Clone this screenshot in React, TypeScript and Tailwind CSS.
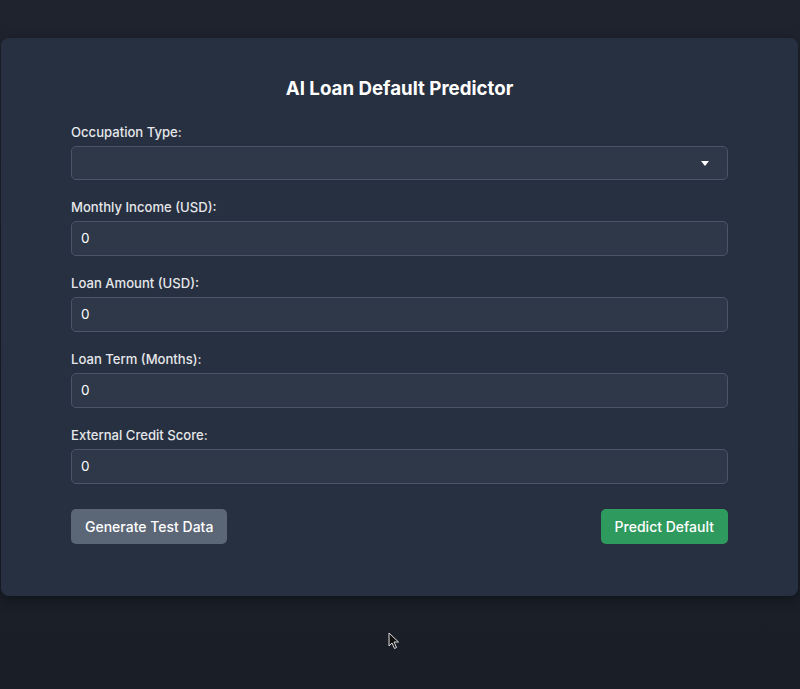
import React from "react";

const fields = [
  "Monthly Income (USD):",
  "Loan Amount (USD):",
  "Loan Term (Months):",
  "External Credit Score:",
];

export default function App() {
  return (
    <div
      className="relative min-h-[689px] w-[800px] bg-gradient-to-b from-[#1e232d] to-[#191e27] pt-[38px]"
      style={{ fontFamily: "Inter, 'Noto Sans', sans-serif" }}
    >
      <div className="ml-[1px] w-[797px] rounded-[8px] bg-[#273040] px-[70px] pt-[37px] pb-[52px] shadow-[0_4px_12px_rgba(0,0,0,0.35)]">
        <h1 className="mb-[19px] text-center text-[18.7px] leading-[28px] font-bold text-white">
          AI Loan Default Predictor
        </h1>
        <div className="flex flex-col gap-[17px]">
          <div className="flex flex-col gap-[4px]">
            <label className="text-[13.1px] leading-[20px] font-medium text-[#e5e7eb]">
              Occupation Type:
            </label>
            <div className="flex h-[34px] items-center justify-end rounded-[5px] border border-[#4b5568] bg-[#2f3848] pr-[18px]">
              <svg width="8" height="5" viewBox="0 0 8 5">
                <path d="M0 0 L8 0 L4 5 Z" fill="#ffffff" />
              </svg>
            </div>
          </div>
          {fields.map((f) => (
            <div key={f} className="flex flex-col gap-[4px]">
              <label className="text-[13.1px] leading-[20px] font-medium text-[#e5e7eb]">
                {f}
              </label>
              <div className="flex h-[35px] items-center rounded-[5px] border border-[#4b5568] bg-[#2f3848] pl-[9px] text-[13.5px] text-white">
                0
              </div>
            </div>
          ))}
        </div>
        <div className="mt-[25px] flex items-center justify-between">
          <button className="h-[35px] rounded-[5px] bg-[#5b6676] px-[14px] text-[14px] font-medium text-white">
            Generate Test Data
          </button>
          <button className="h-[35px] rounded-[5px] bg-[#2f9a5d] px-[14px] text-[14px] font-medium text-white">
            Predict Default
          </button>
        </div>
      </div>
      <svg
        className="absolute left-[388px] top-[632px]"
        width="12"
        height="18"
        viewBox="0 0 12 18"
      >
        <path
          d="M1 1 L1 14 L4 11 L6.5 16.5 L8.5 15.5 L6 10 L10.5 10 Z"
          fill="#111"
          stroke="#ddd"
          strokeWidth="1"
        />
      </svg>
    </div>
  );
}
